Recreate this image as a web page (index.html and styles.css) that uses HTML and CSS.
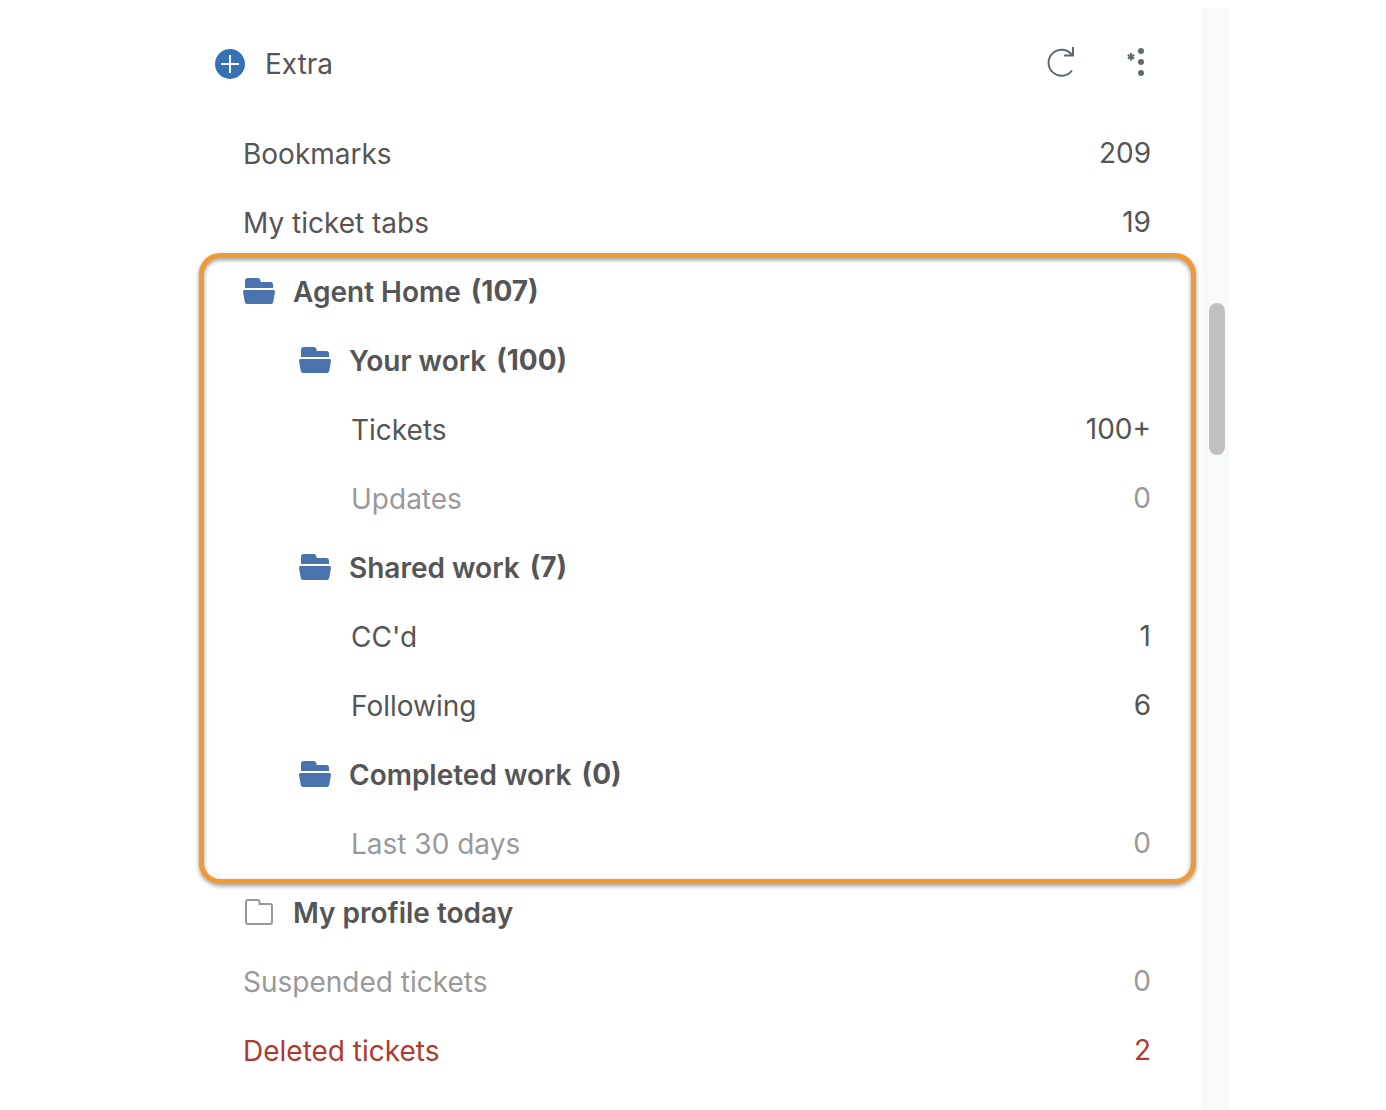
FILE: index.html
```html
<!DOCTYPE html>
<html lang="en">
<head>
<meta charset="utf-8">
<meta name="viewport" content="width=device-width, initial-scale=1">
<title>Extra</title>
<link rel="stylesheet" href="styles.css">
</head>
<body>
<svg class="sprite" aria-hidden="true">
  <symbol id="folder-open" viewBox="0 0 32 26">
    <path d="M2 10V3Q2 0 5 0H14.500Q17.500 0 17.700 4H27.500Q30 4 30 7V10Z"/>
    <path d="M1.500 12H30.500Q32 12 32 14L30.200 24Q29.800 26 28 26H4Q2.200 26 1.800 24L0 14Q0 12 1.500 12Z"/>
  </symbol>
</svg>
<div class="shell">
  <main class="panel">
    <header class="head">
      <button class="add" type="button">
        <svg width="30" height="30" viewBox="0 0 30 30" aria-hidden="true"><circle cx="15" cy="15" r="15" fill="#3572b5"/><path d="M6 15H24M15 6V24" stroke="#fff" stroke-width="2"/></svg>
        <span>Extra</span>
      </button>
      <div class="tools">
        <button type="button" aria-label="Refresh">
          <svg width="28" height="32" viewBox="0 0 28 32" fill="none" stroke="#5d6a72" stroke-width="2" aria-hidden="true"><path d="M25 24.500A13 13 0 1 1 25 9M26 1V9.500H17"/></svg>
        </button>
        <button type="button" aria-label="More options">
          <svg width="18" height="32" viewBox="0 0 18 32" aria-hidden="true"><g fill="#5d6a72"><circle cx="14" cy="5" r="3"/><circle cx="14" cy="16" r="3"/><circle cx="14" cy="27" r="3"/></g><path d="M4 7V14.500M.8 8.800L7.200 12.700M7.200 8.800L.8 12.700" stroke="#5d6a72" stroke-width="2"/></svg>
        </button>
      </div>
    </header>
    <nav aria-label="Ticket folders">
      <a class="row" href="#"><span class="label">Bookmarks</span><span class="count">209</span></a>
      <a class="row" href="#"><span class="label">My ticket tabs</span><span class="count">19</span></a>
      <section class="group">
        <button class="row folder" type="button"><svg class="icon"><use href="#folder-open"/></svg><span class="label">Agent Home</span><span class="total">(107)</span></button>
        <button class="row folder nested" type="button"><svg class="icon"><use href="#folder-open"/></svg><span class="label">Your work</span><span class="total">(100)</span></button>
        <a class="row leaf" href="#"><span class="label">Tickets</span><span class="count">100+</span></a>
        <a class="row leaf muted" href="#"><span class="label">Updates</span><span class="count">0</span></a>
        <button class="row folder nested" type="button"><svg class="icon"><use href="#folder-open"/></svg><span class="label">Shared work</span><span class="total">(7)</span></button>
        <a class="row leaf" href="#"><span class="label">CC'd</span><span class="count">1</span></a>
        <a class="row leaf" href="#"><span class="label">Following</span><span class="count">6</span></a>
        <button class="row folder nested" type="button"><svg class="icon"><use href="#folder-open"/></svg><span class="label">Completed work</span><span class="total">(0)</span></button>
        <a class="row leaf muted" href="#"><span class="label">Last 30 days</span><span class="count">0</span></a>
      </section>
      <button class="row folder" type="button"><svg class="icon closed" viewBox="0 0 32 26" aria-hidden="true"><path d="M3 23V3Q3 1 5 1H14.500Q16.500 1 16.500 3V5H27Q29 5 29 7V23Q29 25 27 25H5Q3 25 3 23Z"/></svg><span class="label">My profile today</span></button>
      <a class="row muted" href="#"><span class="label">Suspended tickets</span><span class="count">0</span></a>
      <a class="row danger" href="#"><span class="label">Deleted tickets</span><span class="count">2</span></a>
    </nav>
  </main>
  <div class="track"><div class="thumb"></div></div>
</div>
</body>
</html>
```
FILE: styles.css
```css
* {
  box-sizing: border-box;
}

body {
  margin: 0;
  background: #fff;
  color: #555;
  font: 28px/36px Inter, "Liberation Sans", sans-serif;
}

button {
  padding: 0;
  border: 0;
  background: none;
  color: inherit;
  font: inherit;
  text-align: left;
  cursor: pointer;
}

.sprite {
  display: none;
}

.shell {
  display: flex;
  min-height: 100vh;
  padding: 8px 157px 0 199px;
}

.panel {
  flex: 1;
  min-width: 0;
  padding-right: 5px;
}

.head {
  display: flex;
  align-items: center;
  justify-content: space-between;
  height: 110px;
  padding: 2px 51px 0 16px;
}

.add {
  display: flex;
  align-items: center;
  gap: 20px;
}

.tools {
  display: flex;
  gap: 52px;
  padding-bottom: 4px;
}

.tools svg,
.add svg {
  display: block;
}

.row {
  display: flex;
  align-items: center;
  width: 100%;
  height: 69px;
  padding: 0 45px 0 44px;
  color: #555;
  text-decoration: none;
}

.label {
  padding-top: 2px;
}

.count {
  margin-left: auto;
}

.folder {
  font-weight: 600;
}

.nested {
  padding-left: 100px;
}

.leaf {
  padding-left: 152px;
}

.icon {
  flex: none;
  width: 32px;
  height: 26px;
  margin-right: 18px;
  fill: #4a72ad;
}

.closed {
  fill: none;
  stroke: #999;
  stroke-width: 2;
}

.total {
  margin-left: 10px;
  font-weight: 700;
}

.muted {
  color: #999;
}

.danger {
  color: #b03a30;
}

.group {
  position: relative;
}

/* Highlight ring drawn over the expanded group */
.group::after {
  content: "";
  position: absolute;
  inset: -3px 0 -7px;
  border: 5px solid #f19937;
  border-radius: 21px;
  filter: drop-shadow(0 2px 2px rgba(0, 0, 0, 0.4));
  pointer-events: none;
}

.track {
  flex: none;
  width: 28px;
  padding: 295px 4px 0 8px;
  background: #f8faf9;
}

.thumb {
  height: 152px;
  border-radius: 8px;
  background: #c1c1c1;
}
```
